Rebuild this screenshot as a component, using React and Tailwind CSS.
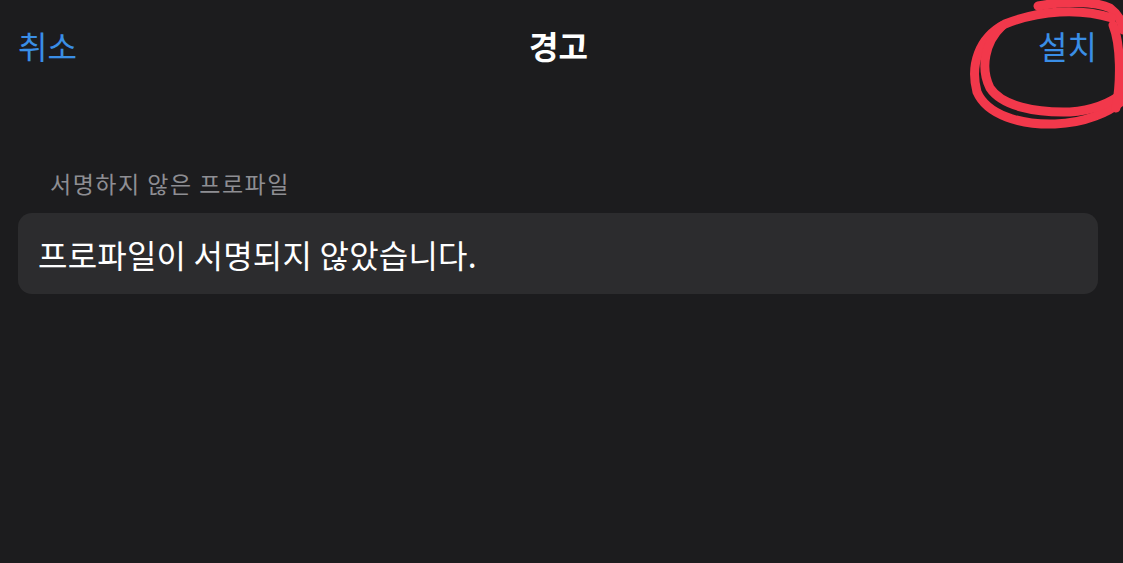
import React from "react";

const Scribble = () => (
    <svg
        className="absolute left-[960px] top-0 pointer-events-none"
        width="163"
        height="135"
        viewBox="0 0 163 135"
        fill="none"
        stroke="#f2384b"
        strokeLinecap="round"
        strokeLinejoin="round"
        strokeWidth="9"
    >
        <path d="M78 6 C105 1, 135 1, 150 8 C158 14, 162 22, 163 30" />
        <path d="M152 18 C120 8, 80 10, 45 24 C18 38, 10 66, 17 92 C27 115, 60 125, 95 124 C125 123, 150 112, 163 100" />
        <path d="M42 26 C25 42, 20 68, 30 88 C42 106, 75 113, 110 112 C135 110, 152 102, 163 93" />
        <path d="M153 25 C161 45, 161 82, 156 108" />
    </svg>
);

export default function App() {
    return (
        <div
            className="relative w-[1123px] h-[563px] overflow-hidden bg-[#1c1c1e]"
            style={{ fontFamily: '"Noto Sans CJK KR", "Noto Sans", sans-serif' }}
        >
            {/* nav bar */}
            <div className="flex h-[92px] items-center justify-between pl-[18px] pr-[26px] pb-[2px]">
                <button className="text-[32px] text-[#3a8ee6]">취소</button>
                <h1 className="pl-[2px] text-[32px] font-bold text-white">경고</h1>
                <button className="text-[32px] text-[#3a8ee6]">설치</button>
            </div>

            <div className="pl-[18px] pr-[25px] pt-[76px]">
                <p className="pl-[32px] text-[23px] leading-[30px] text-[#8e8e93] tracking-[1.5px]">
                    서명하지 않은 프로파일
                </p>
                <div className="mt-[15px] flex h-[81px] items-center rounded-[14px] bg-[#2c2c2e] px-[20px]">
                    <span className="text-[32px] text-white tracking-[0.2px]">
                        프로파일이 서명되지 않았습니다.
                    </span>
                </div>
            </div>

            <Scribble />
        </div>
    );
}
